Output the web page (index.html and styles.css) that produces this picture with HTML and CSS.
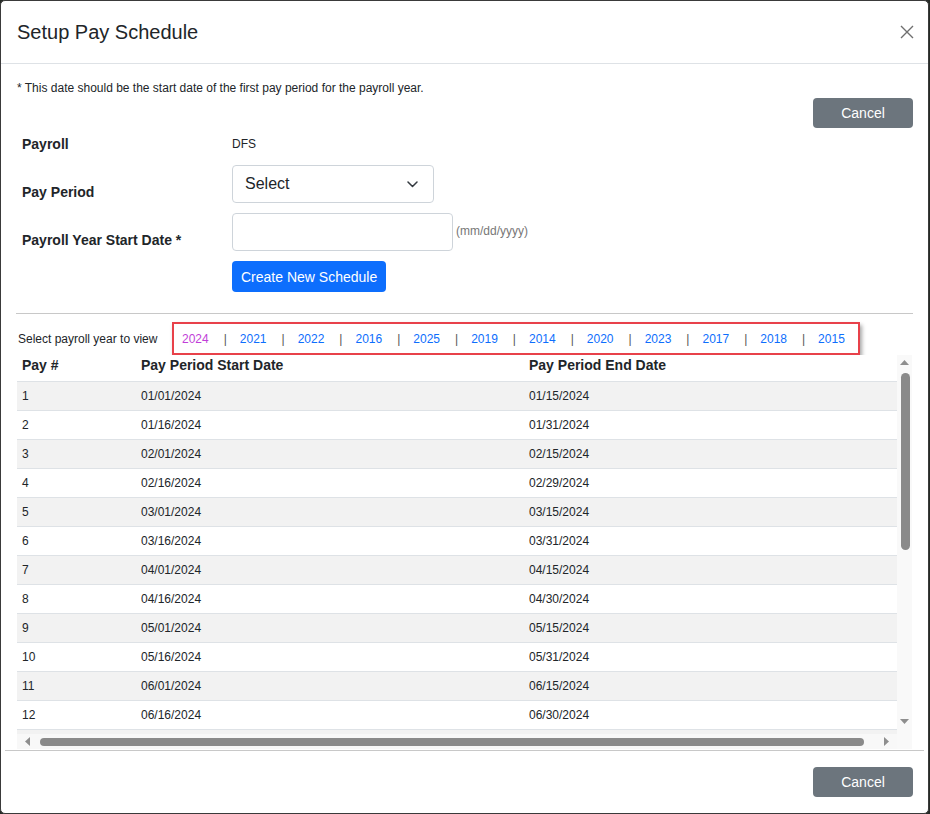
FILE: index.html
```html
<!DOCTYPE html>
<html lang="en">
<head>
<meta charset="utf-8">
<title>Setup Pay Schedule</title>
<link rel="stylesheet" href="styles.css">
</head>
<body>
<div class="modal">
  <div class="modal-header">
    <h5 class="modal-title">Setup Pay Schedule</h5>
    <button class="close" type="button" aria-label="Close">
      <svg width="14" height="14" viewBox="0 0 14 14"><path d="M1 1 L13 13 M13 1 L1 13" stroke="#6f6f6f" stroke-width="1.4" fill="none"/></svg>
    </button>
  </div>
  <div class="modal-body">
    <p class="note">* This date should be the start date of the first pay period for the payroll year.</p>
    <div class="top-actions"><button class="btn btn-secondary" type="button">Cancel</button></div>
    <div class="form">
      <div class="form-row row-first">
        <div class="label">Payroll</div>
        <div class="value">DFS</div>
      </div>
      <div class="form-row row-gap12">
        <div class="label label-low">Pay Period</div>
        <div class="select">Select
          <svg class="chev" width="11" height="7" viewBox="0 0 11 7"><path d="M1 1 L5.5 5.5 L10 1" stroke="#343a40" stroke-width="1.5" fill="none" stroke-linecap="round" stroke-linejoin="round"/></svg>
        </div>
      </div>
      <div class="form-row row-gap10">
        <div class="label label-low">Payroll Year Start Date *</div>
        <div class="input"></div>
        <span class="hint">(mm/dd/yyyy)</span>
      </div>
      <div class="form-row row-gap10">
        <div class="label"></div>
        <button class="btn btn-primary" type="button">Create New Schedule</button>
      </div>
    </div>
    <hr class="divider">
    <div class="year-bar">
      <span class="year-label">Select payroll year to view</span>
      <span class="years">
        <a class="year active">2024</a><span class="sep">|</span>
        <a class="year">2021</a><span class="sep">|</span>
        <a class="year">2022</a><span class="sep">|</span>
        <a class="year">2016</a><span class="sep">|</span>
        <a class="year">2025</a><span class="sep">|</span>
        <a class="year">2019</a><span class="sep">|</span>
        <a class="year">2014</a><span class="sep">|</span>
        <a class="year">2020</a><span class="sep">|</span>
        <a class="year">2023</a><span class="sep">|</span>
        <a class="year">2017</a><span class="sep">|</span>
        <a class="year">2018</a><span class="sep">|</span>
        <a class="year">2015</a>
      </span>
    </div>
    <div class="table-frame">
      <div class="viewport">
        <table class="sched">
          <colgroup><col class="c1"><col class="c2"><col class="c3"></colgroup>
          <thead>
            <tr><th>Pay #</th><th>Pay Period Start Date</th><th>Pay Period End Date</th></tr>
          </thead>
          <tbody>
            <tr><td>1</td><td>01/01/2024</td><td>01/15/2024</td></tr>
            <tr><td>2</td><td>01/16/2024</td><td>01/31/2024</td></tr>
            <tr><td>3</td><td>02/01/2024</td><td>02/15/2024</td></tr>
            <tr><td>4</td><td>02/16/2024</td><td>02/29/2024</td></tr>
            <tr><td>5</td><td>03/01/2024</td><td>03/15/2024</td></tr>
            <tr><td>6</td><td>03/16/2024</td><td>03/31/2024</td></tr>
            <tr><td>7</td><td>04/01/2024</td><td>04/15/2024</td></tr>
            <tr><td>8</td><td>04/16/2024</td><td>04/30/2024</td></tr>
            <tr><td>9</td><td>05/01/2024</td><td>05/15/2024</td></tr>
            <tr><td>10</td><td>05/16/2024</td><td>05/31/2024</td></tr>
            <tr><td>11</td><td>06/01/2024</td><td>06/15/2024</td></tr>
            <tr><td>12</td><td>06/16/2024</td><td>06/30/2024</td></tr>
          </tbody>
        </table>
      </div>
      <div class="vbar">
        <div class="vbtn">
          <svg width="9" height="5" viewBox="0 0 9 5"><path d="M0 5 L4.5 0 L9 5Z" fill="#8e8e8e"/></svg>
        </div>
        <div class="vtrack"><div class="vthumb"></div></div>
        <div class="vbtn">
          <svg width="9" height="5" viewBox="0 0 9 5"><path d="M0 0 L4.5 5 L9 0Z" fill="#8e8e8e"/></svg>
        </div>
      </div>
      <div class="hbar">
        <svg class="harrow" width="5" height="9" viewBox="0 0 5 9"><path d="M5 0 L0 4.5 L5 9Z" fill="#8e8e8e"/></svg>
        <div class="hthumb"></div>
        <svg class="harrow" width="5" height="9" viewBox="0 0 5 9"><path d="M0 0 L5 4.5 L0 9Z" fill="#8e8e8e"/></svg>
      </div>
      <div class="corner"></div>
    </div>
  </div>
  <div class="modal-footer">
    <button class="btn btn-secondary" type="button">Cancel</button>
  </div>
</div>
</body>
</html>
```
FILE: styles.css
```css
* { box-sizing: border-box; }

html, body {
  margin: 0;
  padding: 0;
  background: #262a26;
  font-family: "Liberation Sans", Arial, sans-serif;
  color: #212529;
}

.modal {
  width: 929px;
  background: #fff;
  border: 1px solid #3a3a3a;
  border-radius: 5px;
  overflow: hidden;
}

.modal-header {
  display: flex;
  align-items: center;
  justify-content: space-between;
  padding: 16px 14px 16px 16px;
  border-bottom: 1px solid #dee2e6;
}

.modal-title {
  margin: 0;
  font-size: 20px;
  font-weight: 400;
  line-height: 30px;
}

.close {
  border: 0;
  background: transparent;
  padding: 0;
  width: 14px;
  height: 14px;
  display: flex;
  cursor: pointer;
}

.modal-body {
  padding: 15px 15px 1px 16px;
}

.note {
  margin: 0;
  font-size: 12px;
  line-height: 18px;
}

.top-actions {
  display: flex;
  justify-content: flex-end;
  margin-top: 1px;
}

.btn {
  font-family: "Liberation Sans", Arial, sans-serif;
  font-size: 14px;
  border: 0;
  border-radius: 4px;
  color: #fff;
  cursor: pointer;
}

.btn-secondary {
  width: 100px;
  height: 30px;
  background: #6c757d;
}

.btn-primary {
  height: 31px;
  padding: 0 9px;
  background: #0d6efd;
}

.form-row {
  display: flex;
  align-items: flex-start;
}

.row-first {
  margin-top: 7px;
  align-items: center;
}

.row-gap12 { margin-top: 12px; }
.row-gap10 { margin-top: 10px; }

.label {
  width: 215px;
  padding-left: 5px;
  font-size: 14px;
  font-weight: 700;
  line-height: 18px;
  flex-shrink: 0;
}

.label-low {
  padding-top: 18px;
}

.value {
  font-size: 12px;
  line-height: 18px;
}

.select {
  width: 202px;
  height: 38px;
  border: 1px solid #ced4da;
  border-radius: 4px;
  display: flex;
  align-items: center;
  justify-content: space-between;
  padding: 0 15px 0 12px;
  font-size: 16px;
}

.input {
  width: 221px;
  height: 38px;
  border: 1px solid #ced4da;
  border-radius: 4px;
}

.hint {
  margin-left: 3px;
  margin-top: 11px;
  font-size: 12px;
  color: #777;
}

.divider {
  margin: 21px 0 0 -1px;
  border: 0;
  border-top: 1px solid #c8c8c8;
  height: 0;
}

.year-bar {
  display: flex;
  align-items: center;
  margin-top: 8px;
  padding-left: 1px;
}

.year-label {
  font-size: 12px;
  width: 154px;
  padding-top: 1px;
}

.years {
  display: flex;
  align-items: center;
  height: 33px;
  border: 2px solid #e8414a;
  box-shadow: 2px 3px 4px rgba(0, 0, 0, 0.35);
  padding: 1px 13px 0 8px;
  font-size: 12px;
}

.year {
  color: #0d6efd;
  text-decoration: none;
}

.year.active {
  color: #c13ed8;
}

.sep {
  color: #555;
  margin: 0 13px 0 15px;
}

.table-frame {
  width: 895px;
  display: grid;
  grid-template-columns: 880px 15px;
  grid-template-rows: 379px 15px;
}

.viewport {
  overflow: hidden;
  background: #f2f2f2;
}

.sched {
  width: 900px;
  border-collapse: collapse;
  table-layout: fixed;
}

.c1 { width: 119px; }
.c2 { width: 388px; }
.c3 { width: 393px; }

.sched th {
  text-align: left;
  font-size: 14px;
  font-weight: 700;
  line-height: 20px;
  padding: 0 5px 6px;
  border-bottom: 1px solid #dee2e6;
  vertical-align: top;
  background: #fff;
}

.sched td {
  font-size: 12px;
  line-height: 18px;
  padding: 5px;
  border-bottom: 1px solid #dee2e6;
  background: #fff;
}

.sched tbody tr:nth-child(odd) td {
  background: #f2f2f2;
}

.vbar {
  display: flex;
  flex-direction: column;
  background: #f9f9f9;
  padding-bottom: 5px;
}

.vbtn {
  height: 15px;
  display: flex;
  align-items: center;
  justify-content: center;
  flex-shrink: 0;
}

.vtrack {
  flex: 1;
  padding: 3px 0 0 4px;
}

.vthumb {
  width: 9px;
  height: 177px;
  background: #8a8a8a;
  border-radius: 5px;
}

.hbar {
  display: flex;
  align-items: center;
  background: #f8f8f8;
  padding-left: 8px;
}

.hthumb {
  width: 824px;
  height: 8px;
  margin: 0 20px 0 10px;
  background: #8a8a8a;
  border-radius: 5px;
}

.corner {
  background: #f9f9f9;
}

.modal-footer {
  display: flex;
  justify-content: flex-end;
  margin: 0 4px 0 4px;
  padding: 16px 11px 16px 12px;
  border-top: 1px solid #c8c8c8;
}
```
